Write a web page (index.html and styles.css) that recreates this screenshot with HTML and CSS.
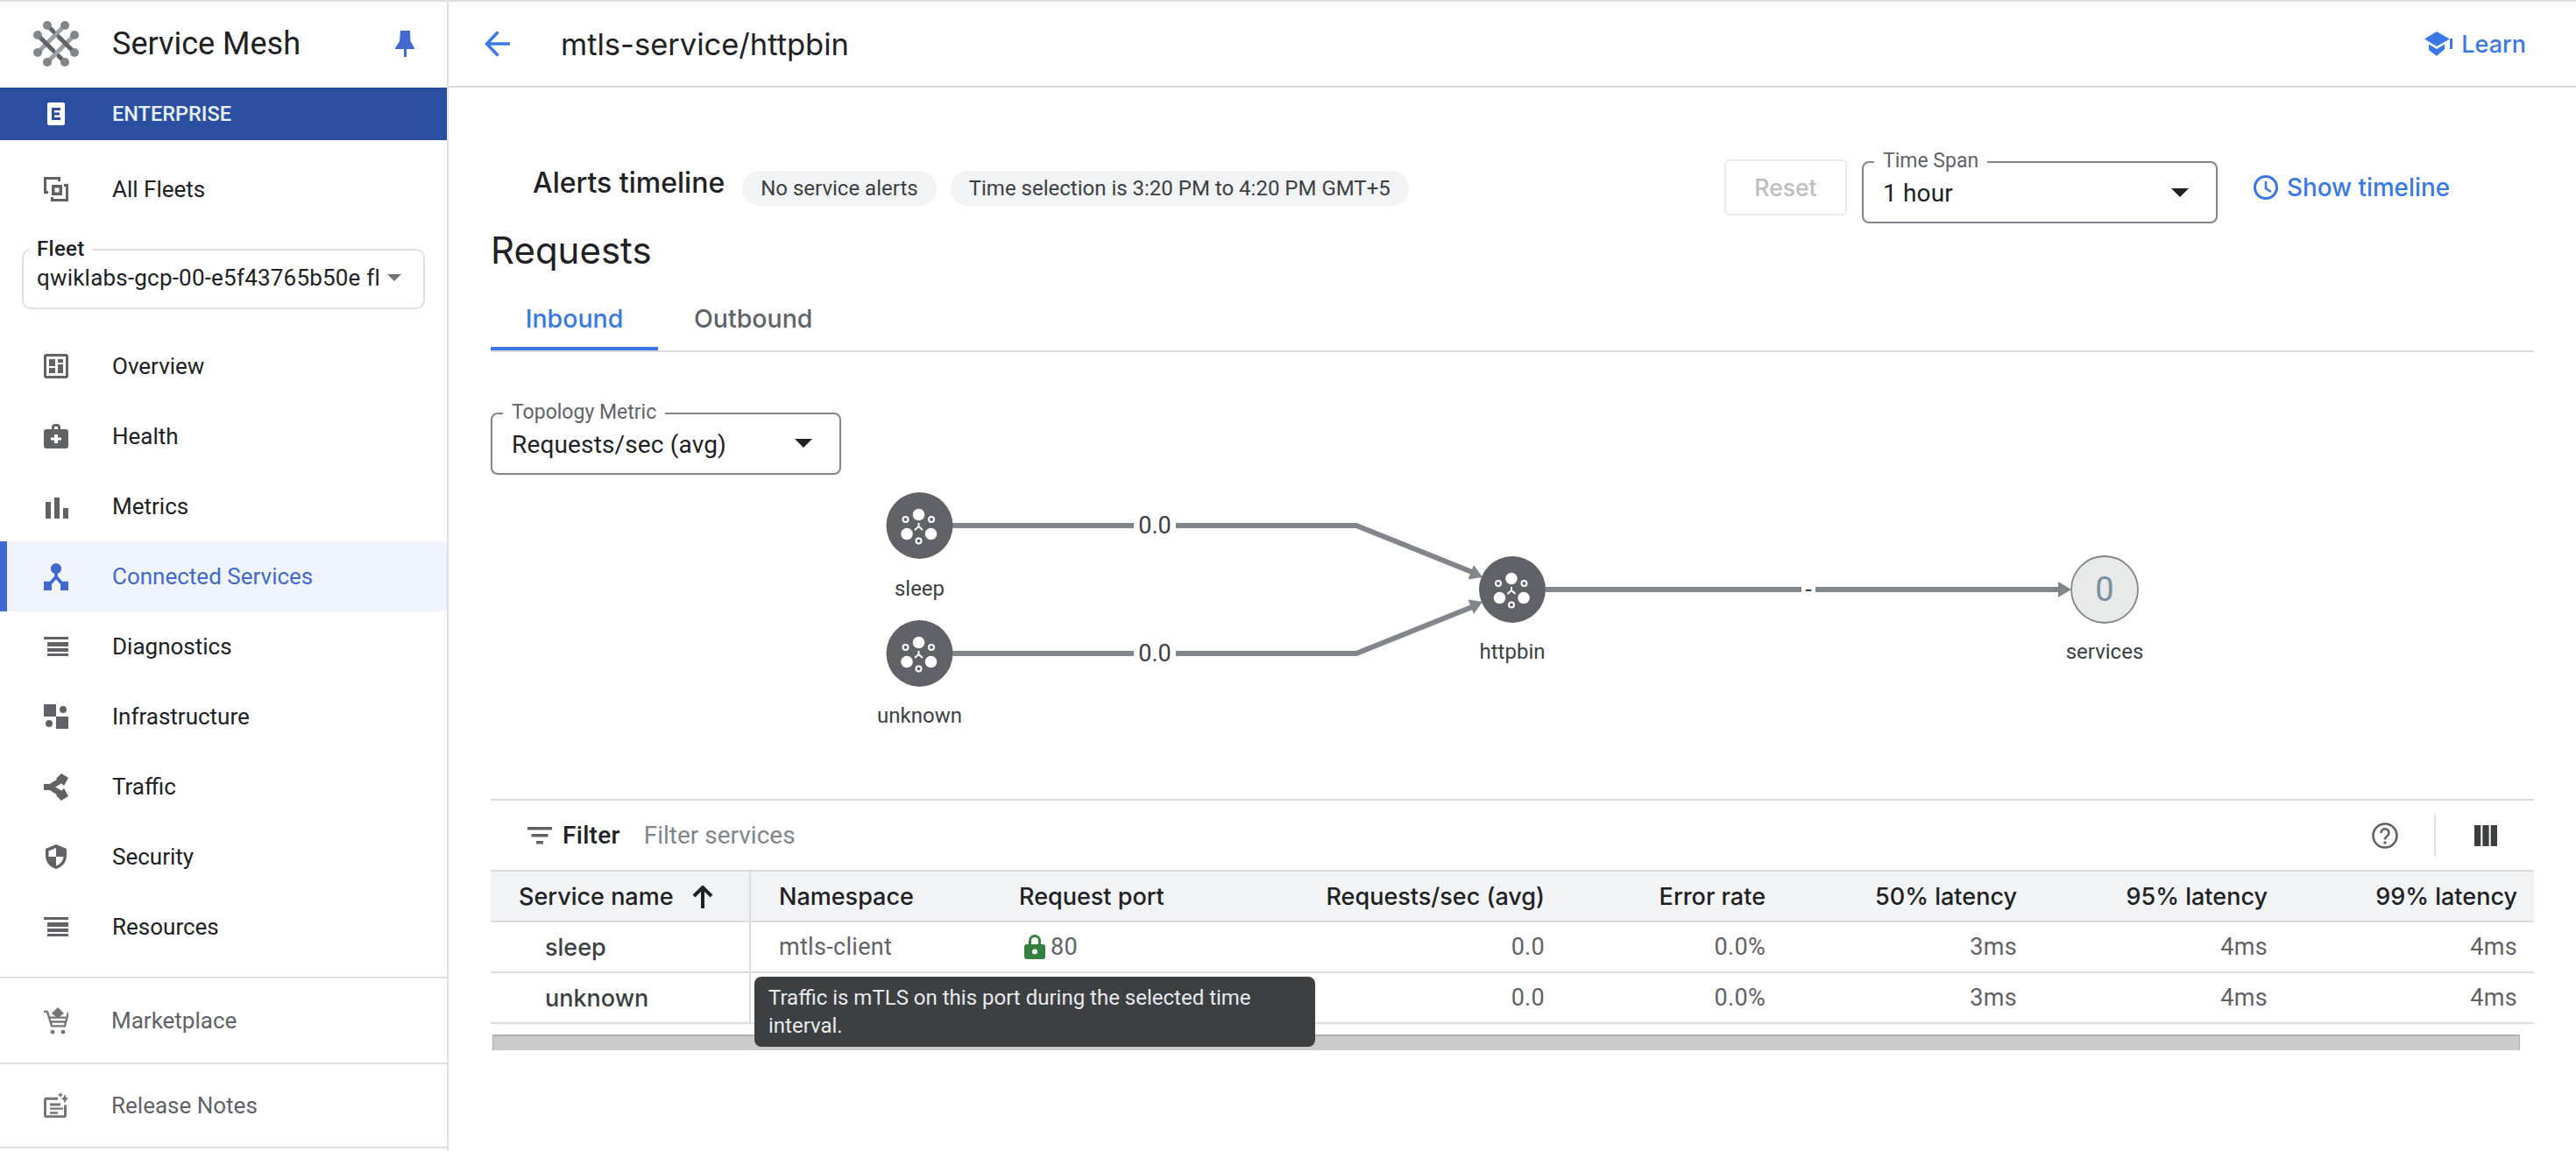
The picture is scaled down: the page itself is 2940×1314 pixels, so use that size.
FILE: index.html
```html
<!DOCTYPE html>
<html lang="en">
<head>
<meta charset="utf-8">
<title>Service Mesh</title>
<link rel="stylesheet" href="styles.css">
</head>
<body>
<svg class="defs" width="0" height="0" aria-hidden="true">
  <defs>
    <g id="svc">
      <circle cx="0" cy="0" r="38" fill="#5f6368"/>
      <circle cx="-1" cy="-12.500" r="6.800" fill="#fff"/>
      <circle cx="-14.500" cy="9.500" r="6.800" fill="#fff"/>
      <circle cx="13" cy="9.500" r="6.800" fill="#fff"/>
      <circle cx="-16" cy="-7" r="3" fill="none" stroke="#fff" stroke-width="2"/>
      <circle cx="13.500" cy="-7" r="3" fill="none" stroke="#fff" stroke-width="2"/>
      <circle cx="-1" cy="17.500" r="3" fill="none" stroke="#fff" stroke-width="2"/>
      <path d="M-1 -3V1M-1 1L-5.500 5M-1 1L3.500 5" stroke="#fff" stroke-width="2" fill="none"/>
    </g>
  </defs>
</svg>
<div class="app">
  <aside class="sidebar">
    <div class="brand">
      <svg class="logo" viewBox="0 0 54 54">
        <g stroke-linecap="round" fill="none">
          <path d="M38 5L5 38" stroke="#9aa0a6" stroke-width="5"/>
          <path d="M49 16L16 49" stroke="#9aa0a6" stroke-width="5"/>
          <path d="M5 16L24 35M30 41L38 49" stroke="#5f6368" stroke-width="5"/>
          <path d="M16 5L24 13M30 19L49 38" stroke="#5f6368" stroke-width="5"/>
        </g>
        <g fill="#80868b">
          <circle cx="17" cy="6" r="5"/><circle cx="37" cy="6" r="5"/>
          <circle cx="6" cy="17" r="5"/><circle cx="48" cy="17" r="5"/>
          <circle cx="6" cy="37" r="5"/><circle cx="48" cy="37" r="5"/>
          <circle cx="17" cy="48" r="5"/><circle cx="37" cy="48" r="5"/>
        </g>
      </svg>
      <span class="brand-name">Service Mesh</span>
      <svg class="pin" viewBox="0 0 22 30"><path d="M6 0H17L17.500 12L22 20V21H13V30H10V21H0V20L5 12Z" fill="#4169d0"/></svg>
    </div>
    <div class="enterprise">
      <svg class="nav-icon" viewBox="0 0 28 28"><path d="M6 1H22A2 2 0 0 1 24 3V25A2 2 0 0 1 22 27H6A2 2 0 0 1 4 25V3A2 2 0 0 1 6 1Z" fill="#fff"/><path d="M9 7H19V10H12V12.500H18V15.500H12V18H19V21H9Z" fill="#2a4fa1"/></svg>
      <span>ENTERPRISE</span>
    </div>
    <div class="nav-item first-item">
      <svg class="nav-icon" viewBox="0 0 28 28"><path d="M0 0H19V5H16V3H3V16H5V19H0Z M9 9H21V21H9Z M12.500 12.500V17.500H17.500V12.500Z M23 8H28V28H8V23H11V25H25V11H23Z" fill="#5f6368" fill-rule="evenodd"/></svg>
      <span>All Fleets</span>
    </div>
    <div class="fleet">
      <span class="fleet-label">Fleet</span>
      <span class="fleet-value">qwiklabs-gcp-00-e5f43765b50e fleet</span>
      <i class="fleet-caret"></i>
    </div>
    <nav class="nav">
      <div class="nav-item">
        <svg class="nav-icon" viewBox="0 0 28 28"><path d="M3 0H25A3 3 0 0 1 28 3V25A3 3 0 0 1 25 28H3A3 3 0 0 1 0 25V3A3 3 0 0 1 3 0Z M3 3V25H25V3Z M6 6H13V14H6Z M16 6H22V10H16Z M16 12H22V22H16Z M6 16H13V22H6Z" fill="#5f6368" fill-rule="evenodd"/></svg>
        <span>Overview</span>
      </div>
      <div class="nav-item">
        <svg class="nav-icon" viewBox="0 0 28 28"><path d="M9 6V4A4 4 0 0 1 13 0H15A4 4 0 0 1 19 4V6H25A3 3 0 0 1 28 9V25A3 3 0 0 1 25 28H3A3 3 0 0 1 0 25V9A3 3 0 0 1 3 6Z M12 6H16V3H12Z M12 12V15.500H8V18.500H12V22H16V18.500H20V15.500H16V12Z" fill="#5f6368" fill-rule="evenodd"/></svg>
        <span>Health</span>
      </div>
      <div class="nav-item">
        <svg class="nav-icon" viewBox="0 0 28 28"><path d="M2 9H8V28H2Z M12 4H18V28H12Z M22 16H28V28H22Z" fill="#5f6368"/></svg>
        <span>Metrics</span>
      </div>
      <div class="nav-item active">
        <svg class="nav-icon icon-tall" viewBox="0 0 28 30" preserveAspectRatio="none"><circle cx="14" cy="6" r="6" fill="#4169d0"/><path d="M0 20H9V30H0Z M19 20H28V30H19Z" fill="#4169d0"/><path d="M14 10V15L6 24M14 15L22 24" stroke="#4169d0" stroke-width="3.600" fill="none"/></svg>
        <span>Connected Services</span>
      </div>
      <div class="nav-item">
        <svg class="nav-icon" viewBox="0 0 28 28"><path d="M0 3H28V6H0Z M4 9H28V14H4Z M4 16H28V20H4Z M4 22H28V25H4Z" fill="#5f6368"/></svg>
        <span>Diagnostics</span>
      </div>
      <div class="nav-item">
        <svg class="nav-icon" viewBox="0 0 28 28"><path d="M0 0H14V14H0Z M14 14H28V28H14Z" fill="#5f6368"/><circle cx="22" cy="6" r="4" fill="#5f6368"/><circle cx="6" cy="22" r="4" fill="#5f6368"/></svg>
        <span>Infrastructure</span>
      </div>
      <div class="nav-item">
        <svg class="nav-icon icon-tall" viewBox="0 0 28 31" preserveAspectRatio="none"><path d="M3 15.500H7L21 7M7 15.500L21 24" stroke="#5f6368" stroke-width="6.500" fill="none"/><path d="M0 12H6V19H0Z M20 0L28 5L23 14L14 6Z M20 31L28 26L23 17L14 25Z" fill="#5f6368"/></svg>
        <span>Traffic</span>
      </div>
      <div class="nav-item">
        <svg class="nav-icon" viewBox="0 0 28 28"><path d="M14 0L26 5V13C26 20 21 26 14 28C7 26 2 20 2 13V5Z M14 4L5.500 7.500V14H14ZM14 14V24.500C18.500 23 22 19 22.500 14Z" fill="#5f6368" fill-rule="evenodd"/></svg>
        <span>Security</span>
      </div>
      <div class="nav-item">
        <svg class="nav-icon" viewBox="0 0 28 28"><path d="M0 3H28V6H0Z M4 9H28V14H4Z M4 16H28V20H4Z M4 22H28V25H4Z" fill="#5f6368"/></svg>
        <span>Resources</span>
      </div>
    </nav>
    <div class="foot-item">
      <svg class="nav-icon icon-tall" viewBox="0 0 28 32" preserveAspectRatio="none"><path d="M16 0L23 7L16 13L9 7Z" fill="#757575"/><path d="M0 5H4L9 22H24L28 6M6 12H25M8 17H25" stroke="#757575" stroke-width="2.400" fill="none"/><circle cx="10" cy="29" r="2.500" fill="#757575"/><circle cx="22" cy="29" r="2.500" fill="#757575"/></svg>
      <span>Marketplace</span>
    </div>
    <div class="foot-item">
      <svg class="nav-icon icon-tall" viewBox="0 0 28 32" preserveAspectRatio="none"><path d="M3 6H16V9H3V27H23V15H26V27A3 3 0 0 1 23 30H3A3 3 0 0 1 0 27V9A3 3 0 0 1 3 6Z M7 13H19V16H7Z M7 18H22V20.500H7Z M7 23H16V25.500H7Z M24 2L25.500 6L28 7.500L25.500 9L24 13L22.500 9L20 7.500L22.500 6Z" fill="#757575"/><path d="M19 0L20 2L22 3L20 4L19 6L18 4L16 3L18 2Z" fill="#757575"/></svg>
      <span>Release Notes</span>
    </div>
  </aside>

  <main class="main">
    <header class="topbar">
      <svg class="back" viewBox="0 0 30 30"><path d="M29 15H3M15.500 1.500L2.500 15L15.500 28.500" stroke="#3b78e7" stroke-width="3.400" fill="none"/></svg>
      <h1 class="title">mtls-service/httpbin</h1>
      <div class="learn">
        <svg class="learn-icon" viewBox="0 0 32 28"><path d="M14 0L28 8V9L14 17L0 8.500Z M5 14.500L14 20L23 14.500V20L14 28L5 21Z" fill="#3b78e7"/><path d="M29 8H32V20H29Z" fill="#3b78e7"/></svg>
        <span>Learn</span>
      </div>
    </header>
    <section class="content">
      <div class="alerts">
        <h2 class="alerts-title">Alerts timeline</h2>
        <span class="pill">No service alerts</span>
        <span class="pill pill-time">Time selection is 3:20 PM to 4:20 PM GMT+5</span>
        <button class="reset">Reset</button>
        <div class="outlined time-span">
          <span class="outlined-label">Time Span</span>
          <span class="outlined-value">1 hour</span>
          <i class="caret"></i>
        </div>
        <div class="show-timeline">
          <svg class="clock" viewBox="0 0 28 28"><circle cx="14" cy="14" r="12.500" stroke="#3b78e7" stroke-width="3" fill="none"/><path d="M14 7V15L20 19" stroke="#3b78e7" stroke-width="2.600" fill="none"/></svg>
          <span>Show timeline</span>
        </div>
      </div>
      <h2 class="requests">Requests</h2>
      <div class="tabs">
        <div class="tab tab-active">Inbound</div>
        <div class="tab">Outbound</div>
      </div>
      <div class="outlined metric">
        <span class="outlined-label">Topology Metric</span>
        <span class="outlined-value">Requests/sec (avg)</span>
        <i class="caret"></i>
      </div>
      <svg class="graph" viewBox="0 0 2380 250" width="2380" height="250">
        <g transform="translate(-560 -550)">
          <g fill="none" stroke="#80868b" stroke-width="6">
            <path d="M1087 600H1294M1342 600H1548L1680 653"/>
            <path d="M1087 746H1294M1342 746H1548L1680 693"/>
            <path d="M1764 673H2056M2072 673H2352"/>
          </g>
          <g fill="#80868b">
            <path d="M1692 659L1682 645L1675.500 661.500Z"/>
            <path d="M1692 687L1682 701L1675.500 684.500Z"/>
            <path d="M2364 673L2349 664V682Z"/>
          </g>
          <use href="#svc" x="1049.500" y="600"/>
          <use href="#svc" x="1049.500" y="746"/>
          <use href="#svc" x="1726" y="673"/>
          <circle cx="2402" cy="673" r="38" fill="#e8eaea" stroke="#80868b" stroke-width="1.800"/>
          <text class="svc-count" x="2402" y="686" text-anchor="middle">0</text>
          <g class="edge-label" text-anchor="middle">
            <text x="1318" y="609">0.0</text>
            <text x="1318" y="755">0.0</text>
            <text x="2064" y="682">-</text>
          </g>
          <g class="node-label" text-anchor="middle">
            <text x="1049.500" y="680">sleep</text>
            <text x="1049.500" y="825">unknown</text>
            <text x="1726" y="752">httpbin</text>
            <text x="2402" y="752">services</text>
          </g>
        </g>
      </svg>
      <div class="table-wrap">
        <div class="toolbar">
          <svg class="filter-icon" viewBox="0 0 28 20"><path d="M0 0H28V3.500H0Z M4.500 8H23.500V11.500H4.500Z M10 16H18V19.500H10Z" fill="#5f6368"/></svg>
          <span class="filter-word">Filter</span>
          <span class="filter-hint">Filter services</span>
          <svg class="help" viewBox="0 0 30 30"><circle cx="15" cy="15" r="13.500" stroke="#5f6368" stroke-width="2.600" fill="none"/><path d="M10.500 12A4.500 4.500 0 1 1 17.500 15.500C15.800 16.600 15 17.500 15 19.500" stroke="#5f6368" stroke-width="2.600" fill="none"/><circle cx="15" cy="23" r="1.700" fill="#5f6368"/></svg>
          <i class="tool-sep"></i>
          <svg class="cols" viewBox="0 0 26 24"><path d="M0 0H7.300V24H0Z M9.350 0H16.650V24H9.350Z M18.700 0H26V24H18.700Z" fill="#3c4043"/></svg>
        </div>
        <table class="table">
          <colgroup>
            <col class="c1"><col class="c2"><col class="c3"><col class="c4"><col class="c5"><col class="c6"><col class="c7"><col class="c8">
          </colgroup>
          <thead>
            <tr>
              <th class="name-h"><span>Service name</span><svg class="sort" viewBox="0 0 24 26"><path d="M12 26V3M2 12L12 2L22 12" stroke="#202124" stroke-width="4" fill="none"/></svg></th>
              <th class="ns">Namespace</th>
              <th>Request port</th>
              <th class="num">Requests/sec (avg)</th>
              <th class="num">Error rate</th>
              <th class="num">50% latency</th>
              <th class="num">95% latency</th>
              <th class="num">99% latency</th>
            </tr>
          </thead>
          <tbody>
            <tr>
              <td class="name">sleep</td>
              <td class="ns">mtls-client</td>
              <td class="port"><svg class="lock" viewBox="0 0 24 28"><path d="M3 11H5V7A7 7 0 0 1 19 7V11H21A3 3 0 0 1 24 14V25A3 3 0 0 1 21 28H3A3 3 0 0 1 0 25V14A3 3 0 0 1 3 11Z M8 11H16V7A4 4 0 0 0 8 7Z" fill="#34803f" fill-rule="evenodd"/><circle cx="12" cy="19.500" r="3" fill="#fff"/></svg><span>80</span></td>
              <td class="num">0.0</td>
              <td class="num">0.0%</td>
              <td class="num">3ms</td>
              <td class="num">4ms</td>
              <td class="num">4ms</td>
            </tr>
            <tr>
              <td class="name">unknown</td>
              <td></td>
              <td></td>
              <td class="num">0.0</td>
              <td class="num">0.0%</td>
              <td class="num">3ms</td>
              <td class="num">4ms</td>
              <td class="num">4ms</td>
            </tr>
          </tbody>
        </table>
        <div class="hscroll"></div>
        <div class="tooltip">Traffic is mTLS on this port during the selected time interval.</div>
      </div>
    </section>
  </main>
</div>
</body>
</html>
```
FILE: styles.css
```css
* { box-sizing: border-box; }
html, body { margin: 0; padding: 0; background: #fff; }
body { font-family: Roboto, "Liberation Sans", sans-serif; color: #202124; width: 2940px; height: 1314px; overflow: hidden; }
.defs { position: absolute; }
.app { display: flex; height: 1314px; border-top: 2px solid #e0e0e0; }

/* sidebar */
.sidebar { width: 512px; flex: none; border-right: 2px solid #e0e0e0; display: flex; flex-direction: column; }
.brand { height: 98px; display: flex; align-items: center; padding: 0 37px 2px 37px; }
.logo { width: 54px; height: 54px; flex: none; }
.brand-name { margin-left: 37px; font-size: 36px; color: #202124; flex: 1; }
.pin { width: 22px; height: 30px; flex: none; }
.enterprise { height: 60px; background: #2a4fa1; color: #e8f0fe; font-size: 23.500px; font-weight: 500; display: flex; align-items: center; padding-left: 50px; }
.nav-icon { width: 28px; height: 28px; flex: none; margin-right: 50px; }
.icon-tall { height: 31px; }
.nav-item { height: 80px; display: flex; align-items: center; padding-left: 50px; font-size: 26px; color: #202124; }
.first-item { margin-top: 16px; }
.active { background: #f0f4fd; color: #4169d0; border-left: 8px solid #4169d0; padding-left: 42px; }
.fleet { margin: 28px 25px 0; height: 69px; border: 2px solid #e0e0e0; border-radius: 10px; position: relative; padding: 14px 15px 0; display: flex; }
.fleet-label { position: absolute; left: 7px; top: -18px; background: #fff; padding: 0 8px; font-size: 24px; line-height: 32px; font-weight: 500; letter-spacing: .3px; }
.fleet-value { width: 390px; font-size: 26px; line-height: 34px; white-space: nowrap; overflow: hidden; letter-spacing: .2px; }
.fleet-caret { position: absolute; left: 415px; top: 27px; border-left: 8px solid transparent; border-right: 8px solid transparent; border-top: 8px solid #757575; }
.nav { margin-top: 25px; padding-bottom: 17px; }
.foot-item { height: 98px; border-top: 2px solid #e0e0e0; display: flex; align-items: center; padding-left: 50px; font-size: 26px; color: #5f6368; }
.foot-item .nav-icon { margin-right: 49px; }
.foot-item:last-child { border-bottom: 2px solid #e0e0e0; }

/* main */
.main { flex: 1; min-width: 0; display: flex; flex-direction: column; }
.topbar { height: 98px; flex: none; border-bottom: 2px solid #dadce0; display: flex; align-items: center; padding: 0 57px 0 41px; }
.back { width: 30px; height: 30px; flex: none; }
.title { margin: 0 0 0 57px; font-family: Inter, Roboto, sans-serif; font-size: 34.500px; font-weight: 400; flex: 1; }
.learn { display: flex; align-items: center; color: #3b78e7; font-family: Inter, Roboto, sans-serif; font-size: 27px; font-weight: 500; }
.learn-icon { width: 32px; height: 28px; margin-right: 10px; }
.content { padding: 0 48px; }
.alerts { height: 78px; margin-top: 78px; display: flex; align-items: center; padding-left: 48px; position: relative; }
.alerts-title { margin: 0 20px 17px 0; font-family: Inter, Roboto, sans-serif; font-size: 32px; font-weight: 500; color: #202124; }
.pill { height: 40px; padding: 0 21px; border-radius: 20px; background: #f1f3f4; display: flex; align-items: center; font-size: 24px; color: #3c4043; margin: 0 16px 4px 0; }
.pill-time { margin-right: auto; }
.reset { width: 140px; height: 64px; border: 2px solid #e8eaed; border-radius: 6px; background: #fff; color: #bdbdbd; font: 500 26.500px Inter, Roboto, sans-serif; margin: 0 17px 6px 0; }
.outlined { position: relative; border: 2px solid #80868b; border-radius: 8px; display: flex; align-items: center; font-size: 28px; }
.outlined-label { position: absolute; left: 12px; top: -15px; background: #fff; padding: 0 10px; font-size: 23px; line-height: 26px; color: #5f6368; }
.outlined-value { padding: 2px 0 0 22px; letter-spacing: .15px; }
.caret { position: absolute; right: 31px; top: 29px; border-left: 10px solid transparent; border-right: 10px solid transparent; border-top: 10px solid #202124; }
.time-span { width: 406px; height: 71px; margin-top: 5px; }
.show-timeline { display: flex; align-items: center; margin: 0 96px 6px 41px; color: #3b78e7; font-family: Inter, Roboto, sans-serif; font-size: 27.800px; font-weight: 500; }
.clock { width: 28px; height: 28px; margin-right: 10px; }
.requests { margin: 0; height: 58px; display: flex; align-items: center; font-family: Inter, Roboto, sans-serif; font-size: 42px; font-weight: 400; color: #202124; }
.tabs { display: flex; height: 88px; border-bottom: 2px solid #dadce0; }
.tab { padding: 0 41px; height: 86px; line-height: 100px; font-family: Inter, Roboto, sans-serif; font-size: 28.500px; font-weight: 500; color: #5f6368; }
.tab-active { color: #3b78e7; width: 191px; padding: 0; text-align: center; border-bottom: 4px solid #3b78e7; }
.metric { width: 400px; height: 71px; margin-top: 69px; }
.metric .caret { top: 28px; }
.graph { display: block; margin-top: 8px; margin-bottom: 112px; overflow: visible; }
.edge-label text { font: 27px Roboto, sans-serif; fill: #3c4043; }
.node-label text { font: 24px Roboto, sans-serif; fill: #3c4043; }
.svc-count { font: 38px Roboto, sans-serif; fill: #7b909f; }
.table-wrap { position: relative; border-top: 2px solid #dadce0; }
.toolbar { height: 79px; display: flex; align-items: center; padding-left: 42px; }
.filter-icon { width: 28px; height: 20px; flex: none; }
.filter-word { margin-left: 12px; font-size: 28px; font-weight: 500; color: #202124; letter-spacing: .3px; }
.filter-hint { margin-left: 27px; font-size: 28px; color: #80868b; flex: 1; }
.help { width: 30px; height: 30px; flex: none; margin-right: 41px; }
.tool-sep { width: 2px; height: 48px; background: #e0e0e0; flex: none; margin-right: 44px; }
.cols { width: 26px; height: 24px; flex: none; margin-right: 42px; }
.table { width: 2332px; border-collapse: collapse; table-layout: fixed; font-size: 27px; }
.c1 { width: 296px; } .c2 { width: 274px; } .c3 { width: 250px; } .c4 { width: 402px; } .c5 { width: 252px; } .c6 { width: 287px; } .c7 { width: 286px; } .c8 { width: 285px; }
.table th { height: 58px; padding: 0 0 0 33px; background: #f1f3f4; font-family: Inter, Roboto, sans-serif; font-size: 27px; font-weight: 500; text-align: left; color: #202124; border-top: 2px solid #dadce0; border-bottom: 2px solid #dadce0; white-space: nowrap; }
.table td { height: 58px; padding: 0 0 0 33px; color: #5f6368; border-bottom: 2px solid #dadce0; letter-spacing: .3px; }
.table th.ns, .table td.ns { padding-left: 32px; }
.table th.num, .table td.num { text-align: right; padding: 0 19px 0 0; }
.table th.name-h { padding-left: 32px; border-right: 2px solid #dadce0; }
.table td.name { padding-left: 62px; color: #3c4043; font-family: Inter, Roboto, sans-serif; font-size: 27px; font-weight: 500; letter-spacing: 0; border-right: 2px solid #dadce0; }
.sort { width: 24px; height: 26px; margin-left: 21px; vertical-align: -4px; }
.port { white-space: nowrap; }
.lock { width: 24px; height: 28px; margin: 0 6px; vertical-align: -5px; }
.hscroll { margin: 12px 16px 0 2px; height: 18px; background: #cbcbcb; border-top: 2px solid #b0b0b0; border-left: 1px solid #b0b0b0; border-right: 1px solid #b0b0b0; }
.tooltip { position: absolute; left: 301px; top: 201px; width: 640px; height: 80px; padding: 8px 16px; background: #3c4043; color: #e8eaed; border-radius: 8px; font-size: 24px; line-height: 32px; }
```
